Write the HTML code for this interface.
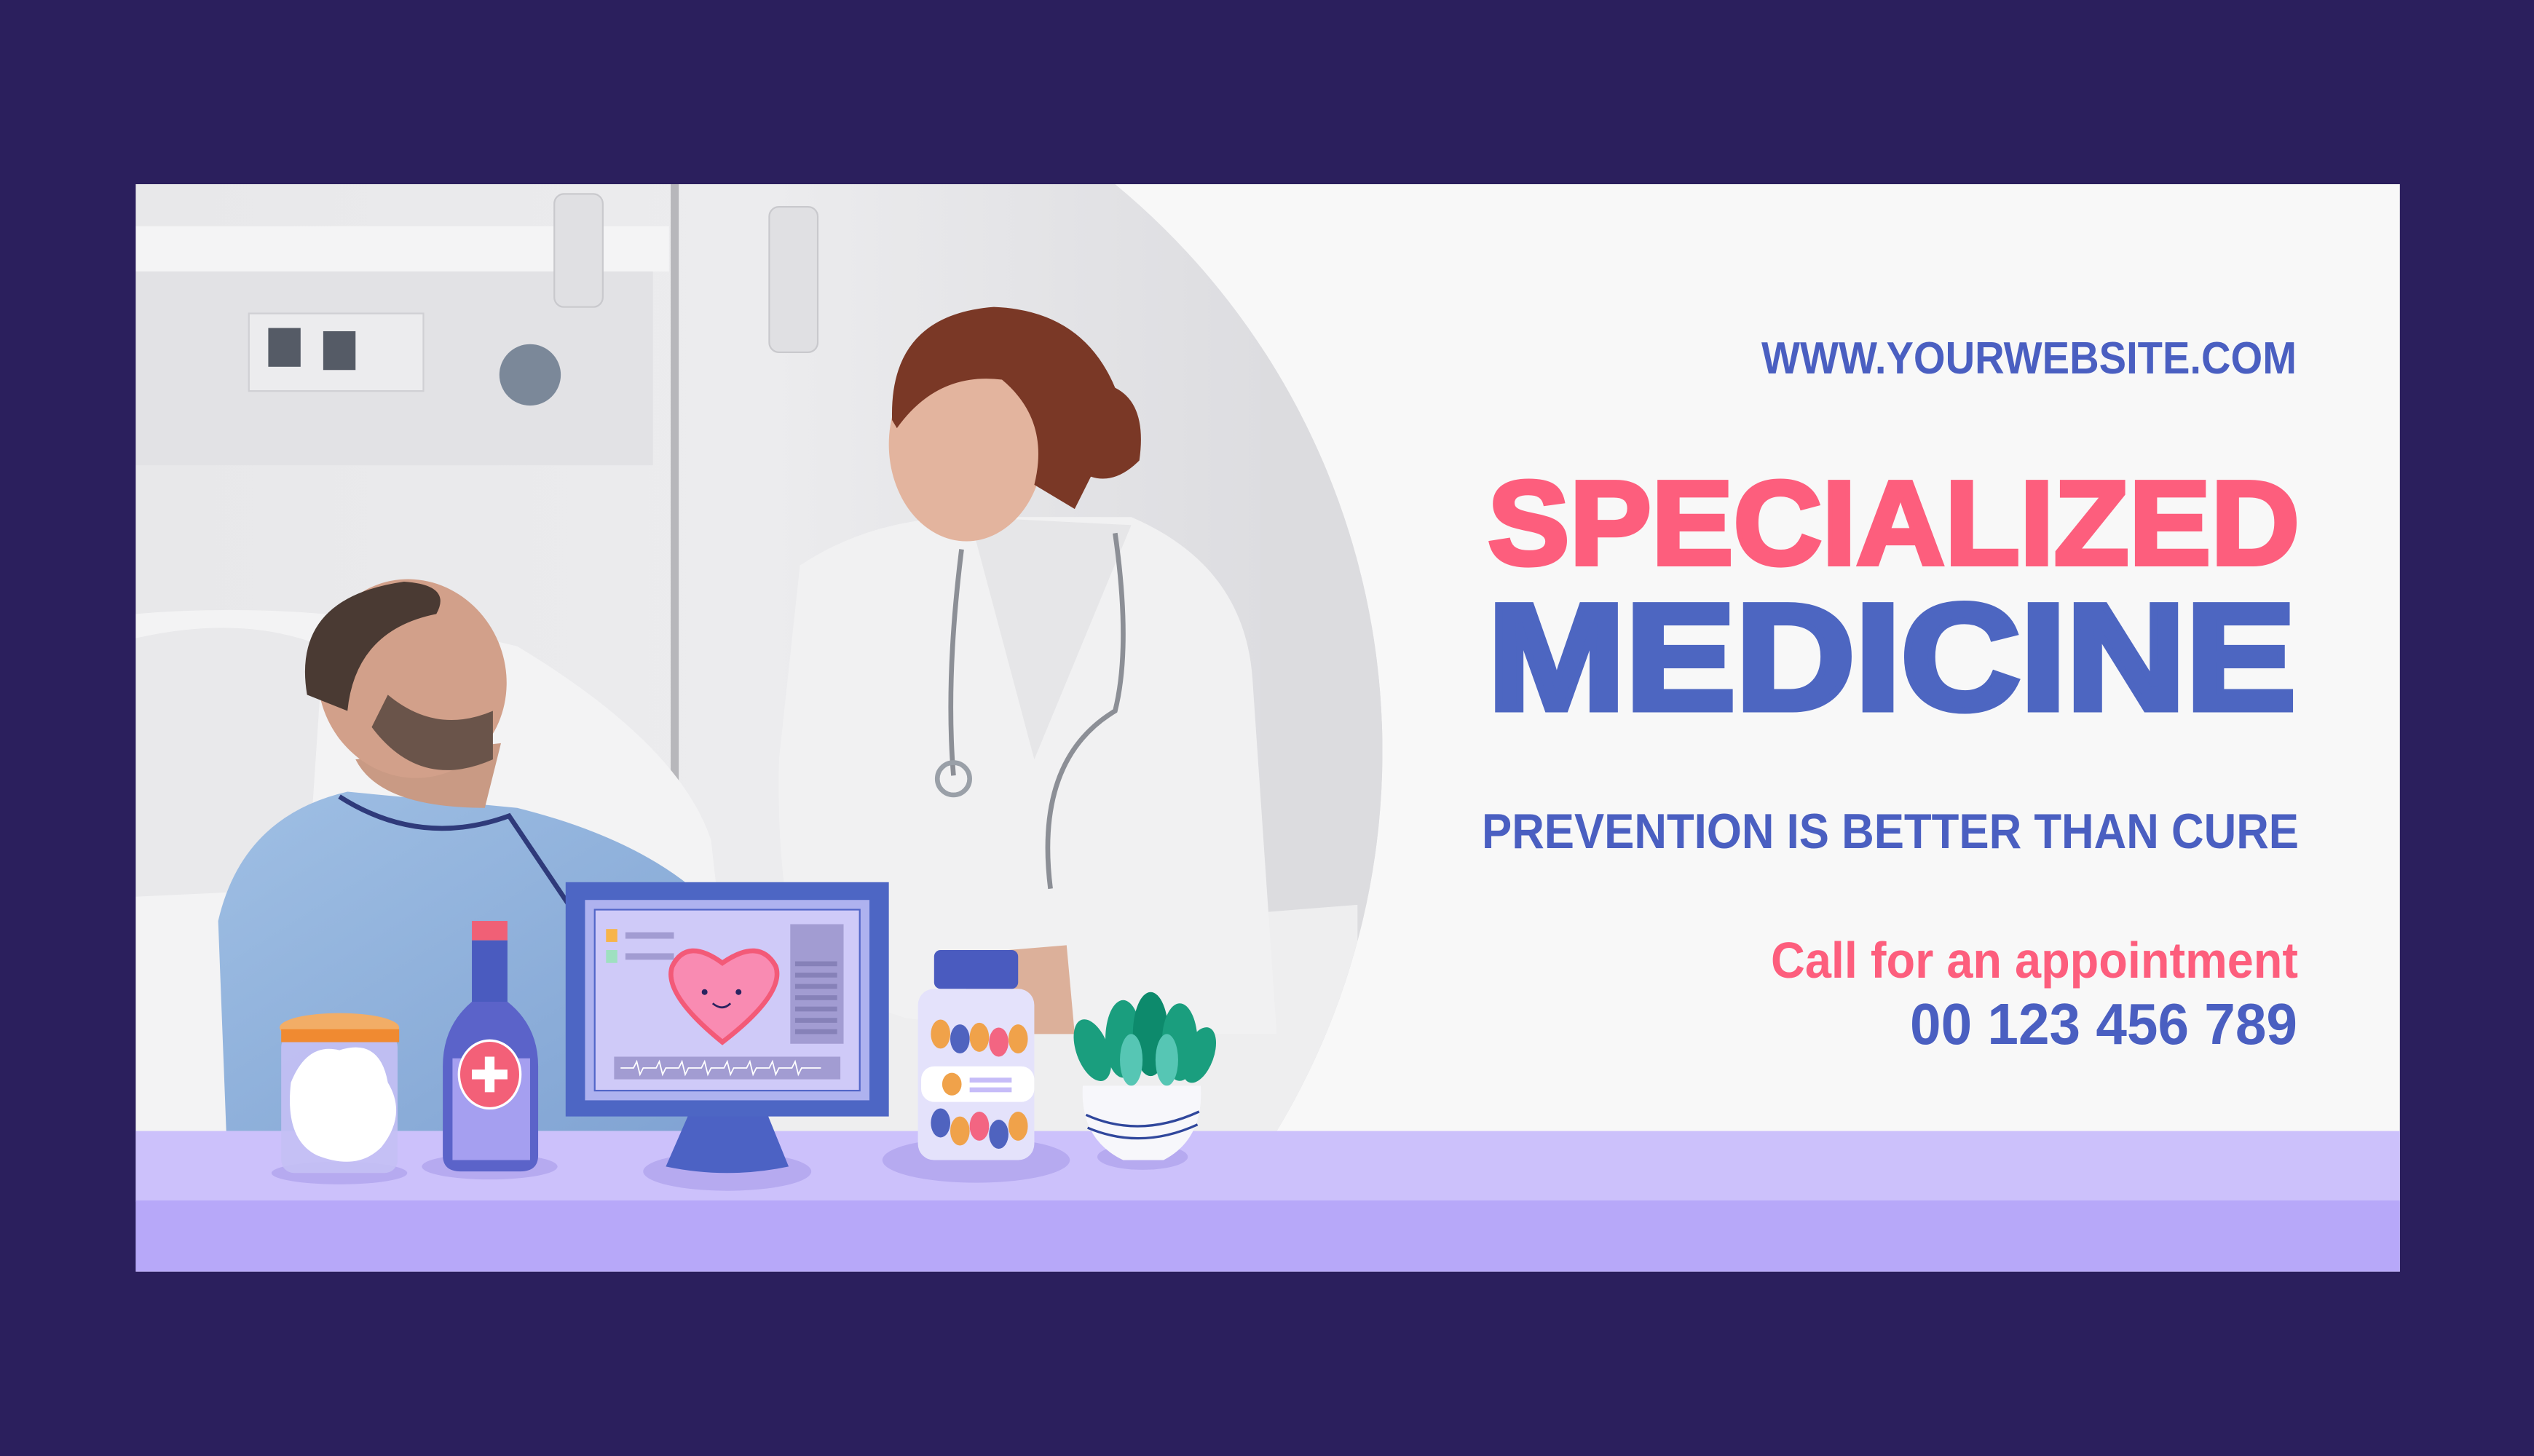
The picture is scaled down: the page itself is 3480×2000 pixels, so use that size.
<!DOCTYPE html>
<html><head><meta charset="utf-8"><style>
html,body{margin:0;padding:0;background:#2b1f5d;}
svg{display:block}
</style></head><body>
<svg width="3480" height="2000" viewBox="0 0 3480 2000" xmlns="http://www.w3.org/2000/svg">
<defs>
<linearGradient id="wall" x1="0" y1="0" x2="1" y2="0">
<stop offset="0" stop-color="#e8e8ea"/><stop offset="0.5" stop-color="#ececee"/><stop offset="1" stop-color="#d9d9dd"/></linearGradient>
<linearGradient id="gown" x1="0" y1="0" x2="1" y2="1">
<stop offset="0" stop-color="#9fbfe4"/><stop offset="1" stop-color="#7fa2d2"/></linearGradient>
<clipPath id="photo"><path d="M84,114 H690 A455,455 0 0 1 790,700 H84 Z"/></clipPath>
</defs>
<rect width="3480" height="2000" fill="#2b1f5d"/>
<g transform="scale(2.2194)">
<rect x="84" y="114" width="1401" height="673" fill="#f8f8f8"/>
<g clip-path="url(#photo)">
<rect x="84" y="114" width="780" height="600" fill="url(#wall)"/>
<rect x="84" y="140" width="330" height="28" fill="#f4f4f5"/>
<rect x="84" y="168" width="320" height="120" fill="#e2e2e5"/>
<rect x="154" y="194" width="108" height="48" fill="#ececee" stroke="#d0d0d4"/>
<rect x="166" y="203" width="20" height="24" fill="#555b66"/>
<rect x="200" y="205" width="20" height="24" fill="#555b66"/>
<circle cx="328" cy="232" r="19" fill="#7b8899"/>
<rect x="415" y="114" width="5" height="370" fill="#b7b7bb"/>
<rect x="343" y="120" width="30" height="70" rx="6" fill="#e0e0e3" stroke="#c9c9cd"/>
<rect x="476" y="128" width="30" height="90" rx="6" fill="#e0e0e3" stroke="#c9c9cd"/>
<rect x="780" y="114" width="100" height="600" fill="#dcdcdf"/>
<path d="M84,380 Q200,370 320,400 Q420,460 440,520 L460,700 H84 Z" fill="#f3f3f4"/>
<path d="M84,395 Q150,380 200,400 L190,550 L84,555 Z" fill="#e9e9eb"/>
<path d="M460,590 L840,560 L840,700 H440 Z" fill="#eeeeef"/>
<path d="M135,570 Q150,505 215,490 L320,500 Q400,520 440,560 L470,700 H140 Z" fill="url(#gown)"/>
<path d="M210,493 Q260,525 315,505 L352,560" fill="none" stroke="#2f3a7a" stroke-width="3"/>
<path d="M220,470 Q235,500 300,500 L310,460 Z" fill="#c99a84"/>
<ellipse cx="255" cy="420" rx="58" ry="62" fill="#d2a08a" transform="rotate(-20 255 420)"/>
<path d="M190,430 Q180,370 250,360 Q280,362 270,380 Q220,390 215,440 Z" fill="#4a3a33"/>
<path d="M230,450 Q260,490 305,470 L305,440 Q270,455 240,430 Z" fill="#6a544a"/>
<path d="M495,350 Q540,320 600,320 L700,320 Q770,350 775,420 L790,640 L640,640 L560,630 L500,610 Q480,560 482,470 Z" fill="#f1f1f2"/>
<path d="M600,320 L640,470 L700,325" fill="#e6e6e8"/>
<path d="M595,340 Q585,420 590,480 M690,330 Q700,400 690,440 Q640,470 650,550" fill="none" stroke="#8c8f96" stroke-width="3"/>
<circle cx="590" cy="482" r="10" fill="none" stroke="#9aa0a8" stroke-width="3"/>
<ellipse cx="598" cy="275" rx="48" ry="60" fill="#e3b49e"/>
<path d="M552,260 Q550,195 615,190 Q670,192 690,240 Q710,250 705,285 Q690,300 675,295 L665,315 L640,300 Q650,260 620,235 Q580,230 555,265 Z" fill="#7a3826"/>
<path d="M600,590 L660,585 L665,640 L595,640 Z" fill="#dcb09a"/>
</g>
<rect x="84" y="700" width="1401" height="44" fill="#ccc1fb"/>
<rect x="84" y="743" width="1401" height="44" fill="#b7a8f9"/>
<ellipse cx="210" cy="726" rx="42" ry="7" fill="#b6aaf0"/>
<ellipse cx="303" cy="722" rx="42" ry="8" fill="#b6aaf0"/>
<ellipse cx="450" cy="725" rx="52" ry="12" fill="#b6aaf0"/>
<ellipse cx="604" cy="718" rx="58" ry="14" fill="#b6aaf0"/>
<ellipse cx="707" cy="716" rx="28" ry="8" fill="#b6aaf0"/>
<rect x="174" y="640" width="72" height="86" rx="8" fill="#c4c0f4" opacity="0.9"/>
<path d="M180,670 q10,-25 30,-20 q25,-8 30,20 q12,20 -4,40 q-15,15 -40,5 q-20,-10 -16,-45z" fill="#ffffff"/>
<ellipse cx="210" cy="636" rx="37" ry="9" fill="#f2ad66"/>
<rect x="174" y="637" width="73" height="8" fill="#f08a31"/>
<rect x="292" y="570" width="22" height="12" fill="#f06076"/>
<rect x="292" y="582" width="22" height="40" fill="#4a5bbf"/>
<path d="M292,620 Q274,635 274,660 L274,715 Q274,725 285,725 L322,725 Q333,725 333,715 L333,660 Q333,635 314,620 Z" fill="#5b63c9"/>
<path d="M280,655 L328,655 L328,718 L280,718 Z" fill="#a59ff0"/>
<ellipse cx="303" cy="665" rx="19" ry="21" fill="#f36078" stroke="#fff" stroke-width="1.5"/>
<rect x="300" y="654" width="6" height="22" fill="#fff"/><rect x="292" y="662" width="22" height="6" fill="#fff"/>
<path d="M426,690 L475,690 L488,722 Q450,730 412,722 Z" fill="#4c62c4"/>
<rect x="350" y="546" width="200" height="145" fill="#4d66c4"/>
<rect x="362" y="557" width="176" height="124" fill="#aeb2ef"/>
<rect x="368" y="563" width="164" height="112" fill="#cfcaf8" stroke="#5266c8" stroke-width="1"/>
<rect x="375" y="575" width="7" height="8" fill="#f7b449"/>
<rect x="375" y="588" width="7" height="8" fill="#9ee0c0"/>
<rect x="387" y="577" width="30" height="4" fill="#a29cd2"/>
<rect x="387" y="590" width="30" height="4" fill="#a29cd2"/>
<rect x="489" y="572" width="33" height="74" fill="#a29cd2"/>
<g fill="#8681b8"><rect x="492" y="595" width="26" height="3"/><rect x="492" y="602" width="26" height="3"/><rect x="492" y="609" width="26" height="3"/><rect x="492" y="616" width="26" height="3"/><rect x="492" y="623" width="26" height="3"/><rect x="492" y="630" width="26" height="3"/><rect x="492" y="637" width="26" height="3"/></g>
<path d="M447,645 Q410,615 416,598 Q425,580 447,596 Q470,580 480,598 Q486,615 447,645 Z" fill="#f98bb2" stroke="#f35a78" stroke-width="3"/>
<circle cx="436" cy="614" r="1.8" fill="#2a2360"/><circle cx="457" cy="614" r="1.8" fill="#2a2360"/>
<path d="M441,621 q6,5 11,0" fill="none" stroke="#2a2360" stroke-width="1.2"/>
<rect x="380" y="654" width="140" height="14" fill="#a29cd2"/>
<path d="M384,661 h8 l2,-4 2,8 2,-4 h8 l2,-4 2,8 2,-4 h8 l2,-4 2,8 2,-4 h8 l2,-4 2,8 2,-4 h8 l2,-4 2,8 2,-4 h8 l2,-4 2,8 2,-4 h8 l2,-4 2,8 2,-4 h8 l2,-4 2,8 2,-4 h12" fill="none" stroke="#fff" stroke-width="0.8"/>
<rect x="568" y="612" width="72" height="106" rx="10" fill="#e4e2fb"/>
<g>
<ellipse cx="582" cy="640" rx="6" ry="9" fill="#f0a24a"/><ellipse cx="594" cy="643" rx="6" ry="9" fill="#4f63bf"/><ellipse cx="606" cy="642" rx="6" ry="9" fill="#f0a24a"/><ellipse cx="618" cy="645" rx="6" ry="9" fill="#f36582"/><ellipse cx="630" cy="643" rx="6" ry="9" fill="#f0a24a"/>
<ellipse cx="582" cy="695" rx="6" ry="9" fill="#4f63bf"/><ellipse cx="594" cy="700" rx="6" ry="9" fill="#f0a24a"/><ellipse cx="606" cy="697" rx="6" ry="9" fill="#f36582"/><ellipse cx="618" cy="702" rx="6" ry="9" fill="#4f63bf"/><ellipse cx="630" cy="697" rx="6" ry="9" fill="#f0a24a"/>
</g>
<rect x="570" y="660" width="70" height="22" rx="8" fill="#fff"/>
<ellipse cx="589" cy="671" rx="6" ry="7" fill="#f0a24a"/>
<rect x="600" y="667" width="26" height="3" fill="#c6bcf8"/><rect x="600" y="673" width="26" height="3" fill="#c6bcf8"/>
<rect x="578" y="588" width="52" height="24" rx="4" fill="#4a5bbf"/>
<g fill="#1a9e7e">
<ellipse cx="676" cy="650" rx="10" ry="20" transform="rotate(-20 676 650)"/>
<ellipse cx="695" cy="643" rx="11" ry="24"/>
<ellipse cx="712" cy="640" rx="11" ry="26" fill="#0d8a6c"/>
<ellipse cx="730" cy="645" rx="11" ry="24"/>
<ellipse cx="742" cy="653" rx="9" ry="18" transform="rotate(20 742 653)"/>
</g>
<ellipse cx="700" cy="656" rx="7" ry="16" fill="#56c6b4"/><ellipse cx="722" cy="656" rx="7" ry="16" fill="#56c6b4"/>
<path d="M670,672 L743,672 Q745,705 720,718 L695,718 Q668,705 670,672 Z" fill="#f7f7fb"/>
<path d="M672,690 Q705,705 742,688 M673,698 Q706,712 741,696" fill="none" stroke="#30479c" stroke-width="1.5"/>
</g>
<g font-family="Liberation Sans, sans-serif" font-weight="bold" text-anchor="end">
<text x="3154" y="513" font-size="62" fill="#4a5fc1" textLength="735" lengthAdjust="spacingAndGlyphs">WWW.YOURWEBSITE.COM</text>
<text x="3158" y="775" font-size="164" fill="#fd5e7d" stroke="#fd5e7d" stroke-width="6" textLength="1115" lengthAdjust="spacingAndGlyphs">SPECIALIZED</text>
<text x="3153" y="974" font-size="207" fill="#4d66c1" stroke="#4d66c1" stroke-width="9" textLength="1110" lengthAdjust="spacingAndGlyphs">MEDICINE</text>
<text x="3157" y="1165" font-size="68" fill="#4a5fc1" textLength="1122" lengthAdjust="spacingAndGlyphs">PREVENTION IS BETTER THAN CURE</text>
<text x="3156" y="1343" font-size="70" fill="#fd5e7d" textLength="724" lengthAdjust="spacingAndGlyphs">Call for an appointment</text>
<text x="3155" y="1434" font-size="80" fill="#4a5fc1" textLength="532" lengthAdjust="spacingAndGlyphs">00 123 456 789</text>
</g>
</svg>
</body></html>
